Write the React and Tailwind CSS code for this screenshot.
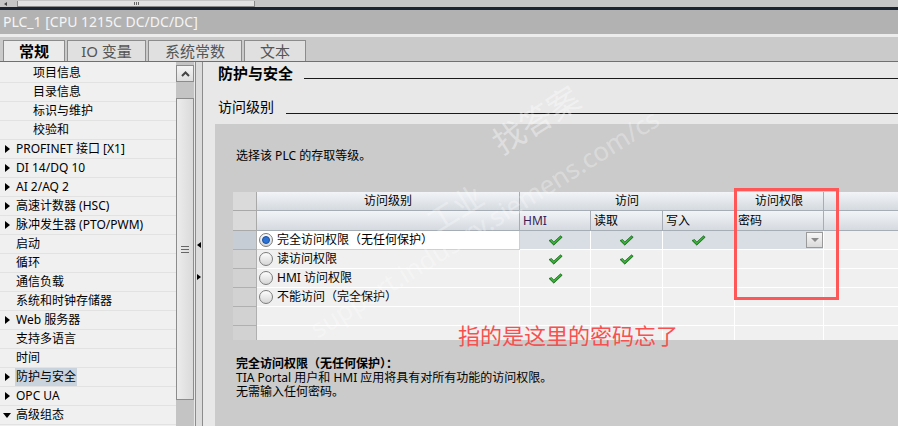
import React from 'react';

const FONT = { fontFamily: '"Noto Sans", "Noto Sans CJK SC", sans-serif' };

const tree = [
  { t: '项目信息', lvl: 1 },
  { t: '目录信息', lvl: 1 },
  { t: '标识与维护', lvl: 1 },
  { t: '校验和', lvl: 1 },
  { t: 'PROFINET 接口 [X1]', arrow: 'right' },
  { t: 'DI 14/DQ 10', arrow: 'right' },
  { t: 'AI 2/AQ 2', arrow: 'right' },
  { t: '高速计数器 (HSC)', arrow: 'right' },
  { t: '脉冲发生器 (PTO/PWM)', arrow: 'right' },
  { t: '启动' },
  { t: '循环' },
  { t: '通信负载' },
  { t: '系统和时钟存储器' },
  { t: 'Web 服务器', arrow: 'right' },
  { t: '支持多语言' },
  { t: '时间' },
  { t: '防护与安全', arrow: 'right', sel: true },
  { t: 'OPC UA', arrow: 'right' },
  { t: '高级组态', arrow: 'down' },
];

const rows = [
  { t: '完全访问权限（无任何保护）', on: true, checks: [true, true, true] },
  { t: '读访问权限', checks: [true, true, false] },
  { t: 'HMI 访问权限', checks: [true, false, false] },
  { t: '不能访问（完全保护）', checks: [false, false, false] },
  { t: '', checks: [false, false, false] },
  { t: '', checks: [false, false, false] },
];

function Check() {
  return (
    <svg width="15" height="11" viewBox="0 0 15 11">
      <path d="M1 5.5 L3.5 4.5 L5.8 7 L12.5 0.8 L14.2 2.2 L5.8 10.2 Z" fill="#1f8a1f" stroke="#0f5a12" strokeWidth="0.6" />
      <path d="M2.2 5.4 L3.4 5 L5.8 7.8 L12.6 1.6 L13.2 2.1 L5.8 9 Z" fill="#45c145" />
    </svg>
  );
}

function Radio({ on }) {
  return (
    <span className="w-[14px] h-[14px] rounded-full border border-[#7c7c7c] bg-gradient-to-b from-[#fdfdfd] to-[#d6d6d6] flex items-center justify-center shrink-0">
      {on && <span className="w-[8px] h-[8px] rounded-full bg-[#2b73d6] border border-[#1b4f9e]" />}
    </span>
  );
}

function Arrow({ dir }) {
  if (dir === 'down') {
    return <span className="w-0 h-0 border-l-[4px] border-r-[4px] border-t-[5px] border-l-transparent border-r-transparent border-t-black" />;
  }
  return <span className="w-0 h-0 border-t-[4px] border-b-[4px] border-l-[5px] border-t-transparent border-b-transparent border-l-black" />;
}

export default function App() {
  return (
    <div className="relative w-[898px] h-[426px] overflow-hidden bg-[#e8e8e8] flex flex-col text-black" style={FONT}>
      {/* top scroll strip */}
      <div className="h-[7px] bg-[#c6c6c6] flex items-end shrink-0">
        <div className="w-[15px] h-[7px] flex items-end pl-[4px] pb-[1px]">
          <span className="w-0 h-0 border-t-[2px] border-b-[2px] border-r-[3px] border-t-transparent border-b-transparent border-r-[#444]" />
        </div>
        <div className="ml-[2px] w-[238px] h-[6px] bg-[#e2e2e2] border-x border-b border-[#8a8a8a] flex justify-center gap-[1px] pt-[1px]">
          <span className="w-px h-[3px] bg-[#666]" />
          <span className="w-px h-[3px] bg-[#666]" />
          <span className="w-px h-[3px] bg-[#666]" />
        </div>
      </div>
      <div className="h-[3px] bg-[#1c2331] shrink-0" />
      {/* title */}
      <div className="h-[24px] bg-[#b2b2b2] text-[#f5f5f5] text-[14px] leading-[24px] pl-[3px] shrink-0">
        PLC_1 [CPU 1215C DC/DC/DC]
      </div>
      <div className="h-[3px] bg-[#ececec] shrink-0" />
      {/* tabs */}
      <div className="h-[25px] bg-[#cacaca] border-b border-[#707070] flex items-end pl-[3px] gap-[2px] shrink-0">
        <div className="w-[62px] h-[21px] bg-[#ebebeb] border border-b-0 border-[#8c8c8c] text-[15px] font-bold leading-[20px] text-center">常规</div>
        <div className="w-[79px] h-[21px] bg-[#e0e0e0] border border-b-0 border-[#8c8c8c] text-[15px] leading-[20px] text-center text-[#555]">IO 变量</div>
        <div className="w-[94px] h-[21px] bg-[#e0e0e0] border border-b-0 border-[#8c8c8c] text-[15px] leading-[20px] text-center text-[#555]">系统常数</div>
        <div className="w-[62px] h-[21px] bg-[#e0e0e0] border border-b-0 border-[#8c8c8c] text-[15px] leading-[20px] text-center text-[#555]">文本</div>
      </div>

      {/* body */}
      <div className="flex flex-1 min-h-0">
        {/* tree */}
        <div className="w-[176px] bg-[#f0f0f0] pt-[2px] flex flex-col shrink-0">
          {tree.map((it, i) => (
            <div key={i} className="h-[19px] border-b border-[#e2e2e2] flex items-center text-[12px] shrink-0">
              <span className="w-[14px] flex justify-center">{it.arrow && <Arrow dir={it.arrow} />}</span>
              <span className={`${it.lvl ? 'ml-[18px]' : 'ml-[1px]'} ${it.sel ? 'bg-[#c9d3dd]' : ''} px-[1px] leading-[18px]`}>{it.t}</span>
            </div>
          ))}
        </div>
        {/* scrollbar */}
        <div className="w-[18px] bg-[#c4c4c4] flex flex-col pt-[3px] shrink-0">
          <div className="h-[17px] border border-[#8c8c8c] bg-gradient-to-b from-[#f4f4f4] to-[#dedede] flex items-center justify-center">
            <svg width="9" height="6" viewBox="0 0 9 6"><path d="M1 5 L4.5 1.5 L8 5" stroke="#444" strokeWidth="2" fill="none" /></svg>
          </div>
          <div className="h-[16px]" />
          <div className="h-[302px] border border-[#8c8c8c] bg-gradient-to-r from-[#ececec] to-[#dadada] flex items-center justify-center">
            <span className="flex flex-col gap-[2px]">
              <span className="w-[8px] h-px bg-[#666]" />
              <span className="w-[8px] h-px bg-[#666]" />
              <span className="w-[8px] h-px bg-[#666]" />
            </span>
          </div>
        </div>
        <div className="w-px bg-[#e8e8e8] shrink-0" />
        {/* splitter */}
        <div className="w-[8px] border-x border-[#8c8c8c] bg-[#dcdcdc] flex flex-col items-center shrink-0 pt-[180px] gap-[26px]">
          <span className="w-0 h-0 border-t-[3px] border-b-[3px] border-r-[4px] border-t-transparent border-b-transparent border-r-black" />
          <span className="w-0 h-0 border-t-[3px] border-b-[3px] border-l-[4px] border-t-transparent border-b-transparent border-l-black" />
        </div>

        {/* right content */}
        <div className="flex-1 min-w-0 flex flex-col pt-[2px]">
          <div className="h-[18px] flex items-end pl-[15px] gap-[11px] shrink-0">
            <span className="text-[15px] font-bold leading-[18px]">防护与安全</span>
            <span className="flex-1 h-px bg-[#1a1a1a] mb-[3px]" />
          </div>
          <div className="h-[18px] mt-[16px] flex items-end pl-[15px] gap-[12px] shrink-0">
            <span className="text-[14px] leading-[18px]">访问级别</span>
            <span className="flex-1 h-px bg-[#1a1a1a] mb-[2px]" />
          </div>

          <div className="flex-1 mt-[8px] ml-[12px] bg-[#cbcbcb] pt-[24px] pl-[18px] flex flex-col">
            <div className="text-[12px] leading-[16px] pl-[3px]">选择该 PLC 的存取等级。</div>

            {/* table */}
            <div className="mt-[28px] h-[148px] overflow-hidden bg-[#f0f0f0] text-[12px]">
              <div className="grid grid-cols-[24px_263px_71px_72px_72px_89px_74px]">
                {/* header row 1 */}
                <div className="h-[19px] bg-[#dadada] border-r border-b border-[#a9a9a9]" />
                <div className="h-[19px] bg-gradient-to-b from-[#f2f4f7] to-[#d5dae0] border-r border-b border-[#a6adb5] flex items-center justify-center">访问级别</div>
                <div className="col-span-3 h-[19px] bg-gradient-to-b from-[#f2f4f7] to-[#d5dae0] border-r border-b border-[#a6adb5] flex items-center justify-center">访问</div>
                <div className="h-[19px] bg-gradient-to-b from-[#f2f4f7] to-[#d5dae0] border-r border-b border-[#a6adb5] flex items-center justify-center">访问权限</div>
                <div className="h-[19px] bg-gradient-to-b from-[#f2f4f7] to-[#d5dae0] border-b border-[#a6adb5]" />
                {/* header row 2 */}
                <div className="h-[20px] bg-[#dadada] border-r border-b border-[#a9a9a9]" />
                <div className="h-[20px] bg-gradient-to-b from-[#f2f4f7] to-[#d5dae0] border-r border-b border-[#a6adb5]" />
                <div className="h-[20px] bg-gradient-to-b from-[#f2f4f7] to-[#d5dae0] border-r border-b border-[#a6adb5] flex items-center pl-[3px] text-[#3a1d57]">HMI</div>
                <div className="h-[20px] bg-gradient-to-b from-[#f2f4f7] to-[#d5dae0] border-r border-b border-[#a6adb5] flex items-center pl-[3px]">读取</div>
                <div className="h-[20px] bg-gradient-to-b from-[#f2f4f7] to-[#d5dae0] border-r border-b border-[#a6adb5] flex items-center pl-[3px]">写入</div>
                <div className="h-[20px] bg-gradient-to-b from-[#f2f4f7] to-[#d5dae0] border-r border-b border-[#a6adb5] flex items-center pl-[3px]">密码</div>
                <div className="h-[20px] bg-gradient-to-b from-[#f2f4f7] to-[#d5dae0] border-b border-[#a6adb5]" />

                {rows.map((r, i) => (
                  <React.Fragment key={i}>
                    <div className={`h-[19px] border-r border-b border-[#b0b0b0] ${r.on ? 'bg-[#c6cdd5]' : 'bg-[#d2d2d2]'}`} />
                    <div className={`h-[19px] border-r border-b flex items-center gap-[4px] pl-[2px] ${r.on ? 'bg-white border-[#d0d0d0]' : 'border-white'}`}>
                      {r.t && <Radio on={r.on} />}
                      <span className="leading-[18px]">{r.t}</span>
                    </div>
                    {r.checks.map((c, j) => (
                      <div key={j} className={`h-[19px] border-r border-b border-white flex items-center justify-center ${r.on ? 'bg-[#d9dee4]' : ''}`}>
                        {c && <Check />}
                      </div>
                    ))}
                    <div className={`h-[19px] border-r border-b border-white flex items-center justify-end ${r.on ? 'bg-[#d9dee4]' : ''}`}>
                      {r.on && (
                        <span className="w-[17px] h-[16px] border border-[#9a9a9a] bg-gradient-to-b from-[#f6f6f6] to-[#dadada] flex items-center justify-center">
                          <span className="w-0 h-0 border-l-[4px] border-r-[4px] border-t-[4px] border-l-transparent border-r-transparent border-t-[#8a8a8a]" />
                        </span>
                      )}
                    </div>
                    <div className="h-[19px] border-b border-white" />
                  </React.Fragment>
                ))}
              </div>
            </div>

            <div className="mt-[17px] pl-[3px] text-[12px] leading-[14px]">
              <div className="font-bold">完全访问权限（无任何保护）：</div>
              <div>TIA Portal 用户和 HMI 应用将具有对所有功能的访问权限。</div>
              <div>无需输入任何密码。</div>
            </div>
          </div>
        </div>
      </div>

      {/* watermark */}
      <div className="absolute left-[488px] top-[96px] text-[32px] text-white/40 -rotate-[32deg] pointer-events-none">找答案</div>
      <div className="absolute left-[425px] top-[186px] text-[30px] text-white/30 -rotate-[32deg] pointer-events-none">工业</div>
      <div className="absolute left-[282px] top-[204px] text-[26px] text-white/30 -rotate-[32deg] pointer-events-none whitespace-nowrap">support.industry.siemens.com/cs</div>

      {/* annotation */}
      <div className="absolute left-[734px] top-[188px] w-[105px] h-[112px] border-[3px] border-[#ff5757]" />
      <div className="absolute left-[458px] top-[320px] text-[22px] leading-[28px] text-[#f85050]" style={{ fontFamily: '"Noto Sans CJK SC", sans-serif' }}>
        指的是这里的密码忘了
      </div>
    </div>
  );
}
